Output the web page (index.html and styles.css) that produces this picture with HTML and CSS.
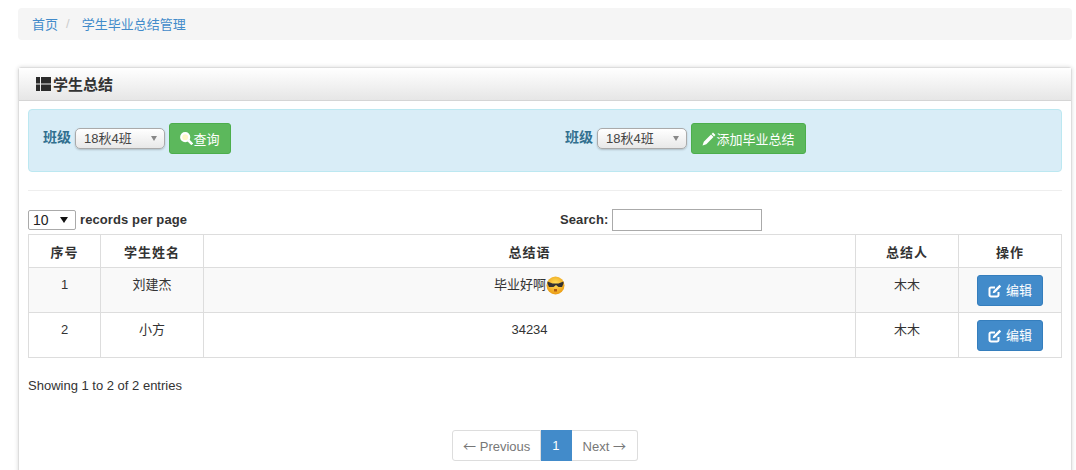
FILE: index.html
```html
<!DOCTYPE html>
<html lang="zh">
<head>
  <meta charset="UTF-8">
  <title>学生毕业总结管理</title>
  <link rel="stylesheet" href="styles.css">
</head>
<body>
  <ul class="breadcrumb">
    <li><a href="#">首页</a></li>
    <li class="sep">/</li>
    <li><a href="#">学生毕业总结管理</a></li>
  </ul>

  <div class="box">
    <div class="box-header">
      <svg class="th-icon" width="15" height="14" viewBox="0 0 15 14"><path fill="#2b2b2b" d="M0 0h4v6.500H0zM0 7.500h4V14H0zM5 0h10v6.500H5zM5 7.500h10V14H5z"/></svg>
      <h2>学生总结</h2>
    </div>
    <div class="box-body">
      <div class="alert">
        <div class="filter">
          <label>班级</label>
          <span class="fake-select">18秋4班</span>
          <a class="btn btn-green" href="#">
            <svg width="13" height="13" viewBox="0 0 13 13"><circle cx="5.200" cy="5.200" r="4" fill="#fff8c8" stroke="#fff" stroke-width="2.200"/><path d="M8 8l4.300 4.300" stroke="#fff" stroke-width="2.600"/></svg>查询
          </a>
        </div>
        <div class="filter">
          <label>班级</label>
          <span class="fake-select">18秋4班</span>
          <a class="btn btn-green btn-add" href="#">
            <svg width="14" height="14" viewBox="0 0 14 14"><path fill="#fff" d="M11 .5L13.500 3l-1.400 1.400-2.500-2.500zM9 2.500L11.500 5l-7.200 7.200-3.800 1.300 1.300-3.800z"/></svg>添加毕业总结
          </a>
        </div>
      </div>
      <hr>
      <div class="table-tools">
        <div class="per-page">
          <span class="small-select">10</span>
          <b>records per page</b>
        </div>
        <div class="search">
          <b>Search:</b>
          <input type="text">
        </div>
      </div>
      <table>
        <thead>
          <tr>
            <th class="col-num">序号</th>
            <th class="col-name">学生姓名</th>
            <th>总结语</th>
            <th class="col-who">总结人</th>
            <th class="col-op">操作</th>
          </tr>
        </thead>
        <tbody>
          <tr class="odd">
            <td>1</td>
            <td>刘建杰</td>
            <td>毕业好啊<svg class="emoji" width="19" height="19" viewBox="0 0 19 19"><defs><radialGradient id="face" cx="50%" cy="40%" r="60%"><stop offset="0" stop-color="#ffe35c"/><stop offset="1" stop-color="#eb9a12"/></radialGradient></defs><circle cx="9.500" cy="9.500" r="9" fill="url(#face)"/><path fill="#333" d="M1.500 5.500l5 2h6l5-2v2l-1.500 3.500h-3.500l-2.500-2-2.500 2H3L1.500 7.500z"/><path fill="#b35a10" d="M8 13h3v2.500H8z"/></svg></td>
            <td>木木</td>
            <td><a class="btn btn-blue" href="#"><svg width="14" height="14" viewBox="0 0 14 14"><path fill="none" stroke="#fff" stroke-width="2" d="M10.500 8v3a1.500 1.500 0 0 1-1.500 1.500H3A1.500 1.500 0 0 1 1.500 11V5A1.500 1.500 0 0 1 3 3.500h4"/><path fill="#fff" d="M11.500.8l1.700 1.700-6.200 6.200-2.300.6.600-2.300z"/></svg> 编辑</a></td>
          </tr>
          <tr>
            <td>2</td>
            <td>小方</td>
            <td>34234</td>
            <td>木木</td>
            <td><a class="btn btn-blue" href="#"><svg width="14" height="14" viewBox="0 0 14 14"><path fill="none" stroke="#fff" stroke-width="2" d="M10.500 8v3a1.500 1.500 0 0 1-1.500 1.500H3A1.500 1.500 0 0 1 1.500 11V5A1.500 1.500 0 0 1 3 3.500h4"/><path fill="#fff" d="M11.500.8l1.700 1.700-6.200 6.200-2.300.6.600-2.300z"/></svg> 编辑</a></td>
          </tr>
        </tbody>
      </table>
      <div class="info">Showing 1 to 2 of 2 entries</div>
      <ul class="pagination">
        <li><a href="#"><span class="arrow">←</span> Previous</a></li>
        <li class="active"><a href="#">1</a></li>
        <li><a href="#">Next <span class="arrow">→</span></a></li>
      </ul>
    </div>
  </div>
</body>
</html>
```

FILE: styles.css
```css
html, body {
  height: 470px;
  overflow: hidden;
}

body {
  margin: 0;
  padding: 8px 4px 0 18px;
  background: #fff;
  color: #333;
  font-family: "Liberation Sans", "Noto Sans CJK SC", sans-serif;
  font-size: 13px;
}

a {
  text-decoration: none;
}

.breadcrumb {
  display: flex;
  align-items: center;
  gap: 8px;
  height: 30px;
  margin: 0 0 27px;
  padding: 0 14px 2px;
  list-style: none;
  background: #f5f5f5;
  border-radius: 4px;
}

.breadcrumb a {
  color: #428bca;
}

.breadcrumb .sep {
  color: #ccc;
  margin-right: 4px;
}

.box {
  height: 480px;
  border: 1px solid #ddd;
  border-radius: 3px;
  box-shadow: 0 0 4px rgba(0,0,0,0.15);
}

.box-header {
  display: flex;
  align-items: center;
  gap: 2px;
  height: 32px;
  padding: 0 17px;
  background: linear-gradient(#fff, #e6e6e6);
  border-bottom: 1px solid #d5d5d5;
}

.box-header h2 {
  margin: -2px 0 0;
  font-size: 15px;
  font-weight: bold;
}

.box-body {
  padding: 8px 9px 0;
}

.alert {
  display: flex;
  height: 63px;
  box-sizing: border-box;
  padding: 13px 14px 0;
  background: #d9edf7;
  border: 1px solid #bce8f1;
  border-radius: 4px;
}

.filter {
  display: flex;
  flex: none;
  align-items: flex-start;
  gap: 4px;
  width: 522px;
}

.filter label {
  margin-top: 5px;
  color: #31708f;
  font-size: 14px;
  font-weight: bold;
  line-height: 18px;
}

.fake-select {
  position: relative;
  width: 90px;
  height: 21px;
  margin-top: 5px;
  box-sizing: border-box;
  padding-left: 8px;
  border: 1px solid #aaa;
  border-radius: 5px;
  background: linear-gradient(#fff, #e8e8e8);
  box-shadow: 0 1px 2px rgba(0,0,0,0.2);
  color: #444;
  font-size: 13px;
  line-height: 20px;
}

.fake-select::after {
  content: "";
  position: absolute;
  top: 7px;
  right: 7px;
  border-left: 3.5px solid transparent;
  border-right: 3.5px solid transparent;
  border-top: 5px solid #888;
}

.btn {
  display: inline-flex;
  align-items: center;
  justify-content: center;
  box-sizing: border-box;
  border-radius: 3px;
  color: #fff;
  font-size: 13px;
}

.btn-green {
  width: 62px;
  height: 31px;
  background: #5cb85c;
  border: 1px solid #4cae4c;
}

.btn-add {
  width: 115px;
}

.btn-blue {
  gap: 4px;
  width: 66px;
  height: 31px;
  margin-top: -1px;
  background: #428bca;
  border: 1px solid #357ebd;
}

hr {
  height: 1px;
  margin: 18px 0;
  border: 0;
  background: #eee;
}

.table-tools {
  display: flex;
  align-items: flex-start;
  height: 25px;
}

.table-tools b {
  margin-top: -2px;
  letter-spacing: 0.1px;
}

.per-page {
  display: flex;
  align-items: center;
  gap: 4px;
  width: 532px;
  height: 22px;
}

.small-select {
  position: relative;
  width: 48px;
  height: 20px;
  box-sizing: border-box;
  padding-left: 4px;
  border: 1px solid #aaa;
  border-radius: 2px;
  color: #222;
  font-size: 14px;
  font-weight: normal;
  line-height: 18px;
}

.small-select::after {
  content: "";
  position: absolute;
  top: 6px;
  right: 7px;
  border-left: 4px solid transparent;
  border-right: 4px solid transparent;
  border-top: 6px solid #111;
}

.search {
  display: flex;
  align-items: center;
  gap: 4px;
  height: 22px;
}

.search input {
  width: 150px;
  height: 22px;
  box-sizing: border-box;
  border: 1px solid #aaa;
  padding: 0 4px;
}

table {
  width: 1034px;
  table-layout: fixed;
  border-collapse: collapse;
}

th, td {
  border: 1px solid #ddd;
  text-align: center;
  vertical-align: top;
}

th {
  height: 32px;
  padding: 0;
  vertical-align: middle;
  letter-spacing: 1px;
  font-weight: bold;
}

td {
  height: 45px;
  box-sizing: border-box;
  padding: 8px 8px 0;
  line-height: 18px;
}

.col-num { width: 71px; }
.col-name { width: 102px; }
.col-who { width: 102px; }
.col-op { width: 102px; }

.odd td {
  background: #f9f9f9;
}

.emoji {
  vertical-align: middle;
}

.info {
  margin-top: 19px;
  font-size: 13px;
  line-height: 17px;
}

.pagination {
  display: flex;
  justify-content: center;
  margin: 36px 0 0;
  padding: 0;
  list-style: none;
}

.pagination a {
  display: block;
  height: 31px;
  box-sizing: border-box;
  padding: 0 11px;
  border: 1px solid #ddd;
  border-left-width: 0;
  color: #777;
  font-size: 13px;
  line-height: 29px;
  white-space: nowrap;
}

.pagination li:first-child a {
  padding: 0 10px;
  border-left-width: 1px;
  border-radius: 3px 0 0 3px;
}

.pagination li:last-child a {
  border-radius: 0 3px 3px 0;
}

.pagination .active a {
  background: #428bca;
  border-color: #428bca;
  color: #fff;
}

.arrow {
  font-family: "Noto Sans CJK SC", sans-serif;
}
```
